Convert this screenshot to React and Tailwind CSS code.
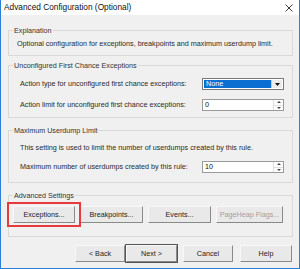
import React from "react";

const font = { fontFamily: '"Liberation Sans", Arial, sans-serif' };

// Botón clásico de Windows
const WinButton = ({ children, w, disabled, isDefault }) => (
  <div
    className={`h-[17px] flex items-center justify-center text-[7.2px] leading-none bg-[#e9e9e9] border border-t-[#f8f8f8] border-l-[#f8f8f8] border-b-[#8a8a8a] border-r-[#8a8a8a] ${
      isDefault ? "outline outline-1 outline-[#555]" : ""
    } ${disabled ? "text-[#a0a0a0]" : "text-[#222]"}`}
    style={{ width: w }}
  >
    {children}
  </div>
);

const SpinBox = ({ value }) => (
  <div className="w-[82px] h-[12px] bg-white border border-[#9a9a9a] flex items-center">
    <span className="flex-1 pl-[2px] text-[7.2px] leading-none text-[#111]">{value}</span>
    <div className="w-[10px] h-full flex flex-col border-l border-[#e0e0e0]">
      <div className="flex-1 flex items-center justify-center border-b border-[#e0e0e0]">
        <svg width="4" height="2" viewBox="0 0 4 2"><path d="M0 2 L2 0 L4 2 Z" fill="#444" /></svg>
      </div>
      <div className="flex-1 flex items-center justify-center">
        <svg width="4" height="2" viewBox="0 0 4 2"><path d="M0 0 L2 2 L4 0 Z" fill="#444" /></svg>
      </div>
    </div>
  </div>
);

const Dropdown = ({ value }) => (
  <div className="w-[82px] h-[12px] bg-white border border-[#7a7a7a] flex items-center p-[1px]">
    <span className="flex-1 h-full bg-[#0a6fd1] text-white text-[7.2px] leading-[8px] pl-[2px]">{value}</span>
    <div className="w-[11px] h-full flex items-center justify-center bg-[#ececec] border-l border-[#c8c8c8]">
      <svg width="5" height="3" viewBox="0 0 5 3"><path d="M0 0 L5 0 L2.5 3 Z" fill="#111" /></svg>
    </div>
  </div>
);

const Group = ({ title, h, className = "", children }) => (
  <fieldset className={`border border-[#d9d9d9] ${className}`} style={{ height: h }}>
    <legend className="ml-[4px] px-[1px] text-[7.2px] leading-[9px] text-[#333]">{title}</legend>
    {children}
  </fieldset>
);

export default function App() {
  return (
    <div className="w-[300px] h-[269px] flex flex-col border-x border-b border-[#2b7fd8] bg-[#f0f0f0]" style={font}>
      {/* Barra de título */}
      <div className="h-[15px] bg-white flex items-center justify-between pl-[3px] pr-[6px]">
        <span className="text-[8.3px] leading-none text-[#111]">Advanced Configuration (Optional)</span>
        <svg width="8" height="8" viewBox="0 0 8 8">
          <path d="M0.5 0.5 L7.5 7.5 M7.5 0.5 L0.5 7.5" stroke="#222" strokeWidth="0.9" />
        </svg>
      </div>

      <div className="flex flex-col pl-[7px] pr-[6px] pt-[11px]">
        <Group title="Explanation" h={30}>
          <div className="pl-[8px] pt-[4px] text-[7.2px] leading-[9px] text-[#2a2a2a]">
            Optional configuration for exceptions, breakpoints and maximum userdump limit.
          </div>
        </Group>

        <Group title="Unconfigured First Chance Exceptions" h={57} className="mt-[5px]">
          <div className="flex flex-col gap-[9px] pl-[11px] pr-[8px] pt-[8px]">
            <div className="flex items-center justify-between">
              <span className="text-[7.2px] leading-none text-[#2a2a2a]">Action type for unconfigured first chance exceptions:</span>
              <Dropdown value="None" />
            </div>
            <div className="flex items-center justify-between">
              <span className="text-[7.2px] leading-none text-[#2a2a2a]">Action limit for unconfigured first chance exceptions:</span>
              <SpinBox value="0" />
            </div>
          </div>
        </Group>

        <Group title="Maximum Userdump Limit" h={57} className="mt-[8px]">
          <div className="flex flex-col gap-[9px] pl-[11px] pr-[8px] pt-[8px]">
            <span className="text-[7.2px] leading-[9px] text-[#2a2a2a]">
              This setting is used to limit the number of userdumps created by this rule.
            </span>
            <div className="flex items-center justify-between">
              <span className="text-[7.2px] leading-none text-[#2a2a2a]">Maximum number of userdumps created by this rule:</span>
              <SpinBox value="10" />
            </div>
          </div>
        </Group>

        <Group title="Advanced Settings" h={46} className="mt-[8px]">
          <div className="flex gap-[5px] pl-[4px] pt-[6px]">
            <div className="relative">
              <WinButton w={62}>Exceptions...</WinButton>
              <div className="absolute -left-[6px] -top-[4px] w-[74px] h-[25px] border-2 border-[#e8393d]" />
            </div>
            <WinButton w={63}>Breakpoints...</WinButton>
            <WinButton w={63}>Events...</WinButton>
            <WinButton w={67} disabled>PageHeap Flags...</WinButton>
          </div>
        </Group>

        <div className="flex mt-[8px] pl-[67px]">
          <WinButton w={50}>&lt; Back</WinButton>
          <div className="ml-[1px]">
            <WinButton w={51} isDefault>Next &gt;</WinButton>
          </div>
          <div className="ml-[6px]">
            <WinButton w={50}>Cancel</WinButton>
          </div>
          <div className="ml-[7px]">
            <WinButton w={52}>Help</WinButton>
          </div>
        </div>
      </div>
    </div>
  );
}
